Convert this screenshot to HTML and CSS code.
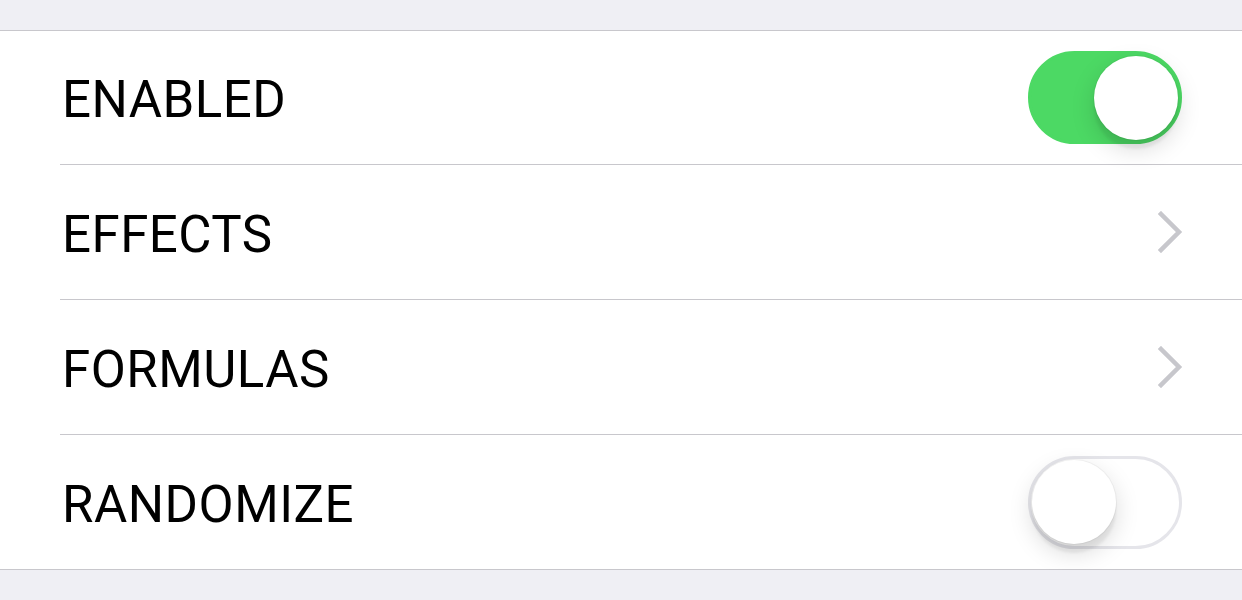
FILE: index.html
```
<!DOCTYPE html>
<html lang="en">
<head>
    <title>Settings</title>
    <link rel="stylesheet" href="styles.css">
</head>
<body>
    <div class="list">
        <div class="row first">
            <div class="row-inner">
                <span class="label">ENABLED</span>
                <div class="switch on"><div class="knob"></div></div>
            </div>
        </div>
        <div class="row">
            <div class="row-inner">
                <span class="label">EFFECTS</span>
                <svg class="chevron" width="26" height="42" viewBox="0 0 26 42">
                    <path d="M3 3 L21 21 L3 39" fill="none" stroke="#c7c7cc" stroke-width="4.5" stroke-linecap="square"/>
                </svg>
            </div>
        </div>
        <div class="row">
            <div class="row-inner">
                <span class="label">FORMULAS</span>
                <svg class="chevron" width="26" height="42" viewBox="0 0 26 42">
                    <path d="M3 3 L21 21 L3 39" fill="none" stroke="#c7c7cc" stroke-width="4.5" stroke-linecap="square"/>
                </svg>
            </div>
        </div>
        <div class="row last">
            <div class="row-inner">
                <span class="label">RANDOMIZE</span>
                <div class="switch"><div class="knob"></div></div>
            </div>
        </div>
    </div>
</body>
</html>
```

FILE: styles.css
```
body {
    margin: 0;
    padding-top: 30px;
    background-color: #efeff4;
    font-family: Roboto, "Liberation Sans", Arial, sans-serif;
}
.list {
    background-color: #fff;
    border-top: 1px solid #c8c7cc;
    border-bottom: 1px solid #c8c7cc;
}
.row {
    padding-left: 60px;
}
.row-inner {
    height: 134px;
    border-bottom: 1px solid #c8c7cc;
    display: flex;
    align-items: center;
    justify-content: space-between;
    padding-right: 60px;
}
.row.first .row-inner {
    height: 133px;
}
.row.last .row-inner {
    border-bottom: none;
}
.label {
    font-size: 51px;
    letter-spacing: 0.5px;
    color: #000;
    padding-left: 2px;
    padding-top: 4px;
}
.chevron {
    display: block;
    margin-right: -2px;
}
.switch {
    width: 154px;
    height: 93px;
    box-sizing: border-box;
    border-radius: 47px;
    border: 3px solid #e5e5ea;
    background-color: #fff;
    display: flex;
    align-items: center;
    padding: 0 1px;
}
.switch.on {
    background-color: #4cd964;
    border-color: #4cd964;
    justify-content: flex-end;
}
.knob {
    width: 84px;
    height: 84px;
    border-radius: 50%;
    background-color: #fff;
    box-shadow: 0 9px 24px rgba(0, 0, 0, 0.15), 0 9px 3px rgba(0, 0, 0, 0.06), 0 0 0 1px rgba(0, 0, 0, 0.04);
}
```
